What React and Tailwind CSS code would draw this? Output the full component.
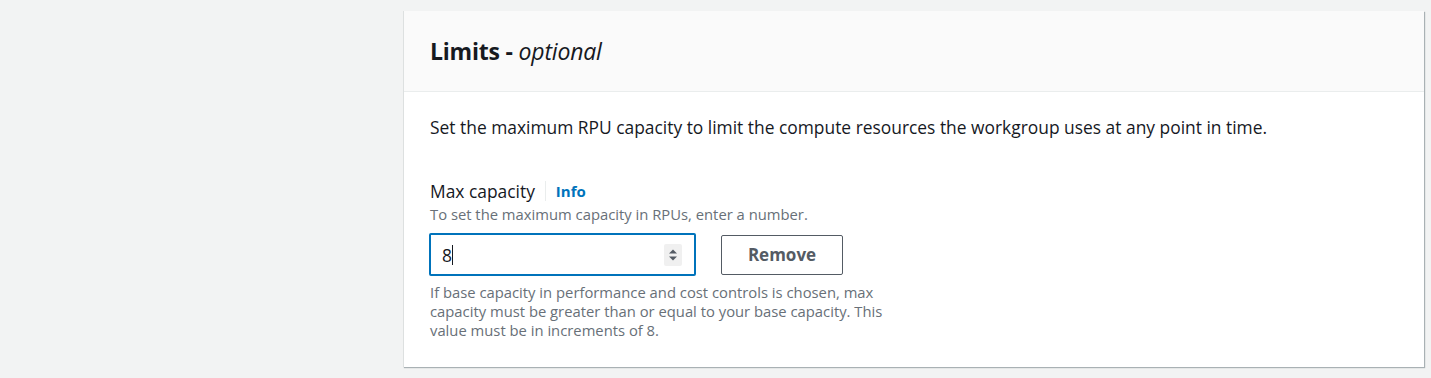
import React from 'react';

/* ── Number field spinner (native-looking) ─────────────────────────────── */
function Spinner() {
  return (
    <div className="w-[18px] h-[22px] bg-[#f0f0f0] rounded-[2px] flex items-center justify-center">
      <svg width="10" height="14" viewBox="0 0 10 14">
        <path d="M5 1.5 L9 5.5 H1 Z" fill="#545b64" />
        <path d="M5 12.5 L9 8.5 H1 Z" fill="#545b64" />
      </svg>
    </div>
  );
}

export default function App() {
  return (
    <div
      className="w-[1431px] h-[378px] bg-[#f2f3f3] pt-[11px] pl-[403px] pr-[7px]"
      style={{ fontFamily: '"Open Sans", Arial, sans-serif' }}
    >
      <div className="bg-white h-[356px] border-l border-[#dde0e0] shadow-[1px_1px_1px_0_rgba(0,28,36,0.3)]">
        {/* ── Header ───────────────────────────────────────────────────── */}
        <div className="h-[81px] bg-[#fafafa] border-b border-[#eaeded] pl-[26px] flex items-center">
          <h2 className="text-[23px] font-bold text-[#16191f] leading-[28px] tracking-[-0.2px]">
            Limits - <i className="font-normal">optional</i>
          </h2>
        </div>

        {/* ── Body ─────────────────────────────────────────────────────── */}
        <div className="pl-[26px] pt-[24px]">
          <p className="text-[17.4px] text-[#16191f] leading-[22px]">
            Set the maximum RPU capacity to limit the compute resources the workgroup uses at any point in time.
          </p>

          <div className="mt-[42px] flex items-center">
            <span className="text-[17.4px] text-[#16191f] leading-[22px]">Max capacity</span>
            <span className="ml-[10px] h-[20px] border-l border-[#eaeded]" />
            <a className="ml-[10px] text-[15px] font-bold text-[#0073bb] leading-[22px]">Info</a>
          </div>
          <div className="text-[14.8px] text-[#687078] leading-[20px] mt-[2px]">
            To set the maximum capacity in RPUs, enter a number.
          </div>

          <div className="mt-[9px] flex items-center">
            <div className="-ml-px w-[267px] h-[43px] border-2 border-[#0073bb] rounded-[2px] flex items-center pl-[11px] pr-[12px]">
              <span className="text-[17.4px] text-[#16191f] leading-[22px]">8</span>
              <span className="w-px h-[20px] bg-[#16191f]" />
              <span className="flex-1" />
              <Spinner />
            </div>
            <button className="ml-[25px] w-[122px] h-[40px] border border-[#545b64] rounded-[2px] text-[17px] font-bold text-[#545b64]">
              Remove
            </button>
          </div>

          <div className="mt-[7px] w-[475px] text-[14.8px] text-[#687078] leading-[19px]">
            If base capacity in performance and cost controls is chosen, max capacity must be greater than or equal to your base capacity. This value must be in increments of 8.
          </div>
        </div>
      </div>
    </div>
  );
}
